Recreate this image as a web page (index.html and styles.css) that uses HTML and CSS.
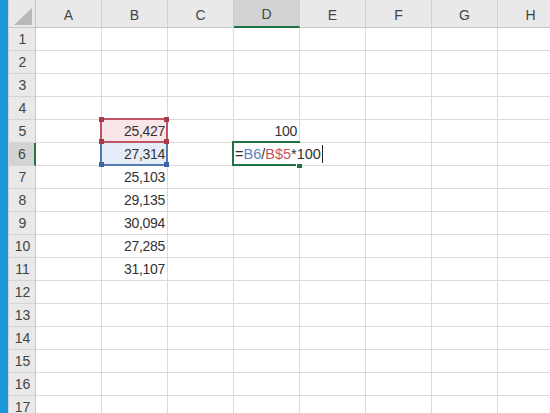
FILE: index.html
```html
<!DOCTYPE html>
<html lang="ja">
<head>
<meta charset="utf-8">
<title>Sheet</title>
<link rel="stylesheet" href="styles.css">
</head>
<body>
<div class="app">
  <div class="edge"></div>
  <div class="sheet">
    <div class="corner"><svg width="18" height="17" viewBox="0 0 18 17"><polygon points="0,17 18,17 18,0" fill="#b9b9b9"/></svg></div>
    <div class="ch">A</div><div class="ch">B</div><div class="ch">C</div><div class="ch ch-sel">D</div><div class="ch">E</div><div class="ch">F</div><div class="ch">G</div><div class="ch">H</div>

    <div class="rh">1</div><div class="c"></div><div class="c"></div><div class="c"></div><div class="c"></div><div class="c"></div><div class="c"></div><div class="c"></div><div class="c"></div>
    <div class="rh">2</div><div class="c"></div><div class="c"></div><div class="c"></div><div class="c"></div><div class="c"></div><div class="c"></div><div class="c"></div><div class="c"></div>
    <div class="rh">3</div><div class="c"></div><div class="c"></div><div class="c"></div><div class="c"></div><div class="c"></div><div class="c"></div><div class="c"></div><div class="c"></div>
    <div class="rh">4</div><div class="c"></div><div class="c"></div><div class="c"></div><div class="c"></div><div class="c"></div><div class="c"></div><div class="c"></div><div class="c"></div>
    <div class="rh">5</div><div class="c"></div><div class="c num ref-red">25,427<span class="rbox rbox-red"><i class="h tl"></i><i class="h tr"></i><i class="h bl"></i><i class="h br"></i></span></div><div class="c"></div><div class="c num">100</div><div class="c"></div><div class="c"></div><div class="c"></div><div class="c"></div>
    <div class="rh rh-sel">6</div><div class="c"></div><div class="c num ref-blue">27,314<span class="rbox rbox-blue"><i class="h bl"></i><i class="h br"></i></span></div><div class="c"></div><div class="c active"><span class="abox"><i class="fill"></i></span><span class="edit">=<span class="t-blue">B6</span>/<span class="t-red">B$5</span>*100<span class="caret"></span></span></div><div class="c"></div><div class="c"></div><div class="c"></div><div class="c"></div>
    <div class="rh">7</div><div class="c"></div><div class="c num">25,103</div><div class="c"></div><div class="c"></div><div class="c"></div><div class="c"></div><div class="c"></div><div class="c"></div>
    <div class="rh">8</div><div class="c"></div><div class="c num">29,135</div><div class="c"></div><div class="c"></div><div class="c"></div><div class="c"></div><div class="c"></div><div class="c"></div>
    <div class="rh">9</div><div class="c"></div><div class="c num">30,094</div><div class="c"></div><div class="c"></div><div class="c"></div><div class="c"></div><div class="c"></div><div class="c"></div>
    <div class="rh">10</div><div class="c"></div><div class="c num">27,285</div><div class="c"></div><div class="c"></div><div class="c"></div><div class="c"></div><div class="c"></div><div class="c"></div>
    <div class="rh">11</div><div class="c"></div><div class="c num">31,107</div><div class="c"></div><div class="c"></div><div class="c"></div><div class="c"></div><div class="c"></div><div class="c"></div>
    <div class="rh">12</div><div class="c"></div><div class="c"></div><div class="c"></div><div class="c"></div><div class="c"></div><div class="c"></div><div class="c"></div><div class="c"></div>
    <div class="rh">13</div><div class="c"></div><div class="c"></div><div class="c"></div><div class="c"></div><div class="c"></div><div class="c"></div><div class="c"></div><div class="c"></div>
    <div class="rh">14</div><div class="c"></div><div class="c"></div><div class="c"></div><div class="c"></div><div class="c"></div><div class="c"></div><div class="c"></div><div class="c"></div>
    <div class="rh">15</div><div class="c"></div><div class="c"></div><div class="c"></div><div class="c"></div><div class="c"></div><div class="c"></div><div class="c"></div><div class="c"></div>
    <div class="rh">16</div><div class="c"></div><div class="c"></div><div class="c"></div><div class="c"></div><div class="c"></div><div class="c"></div><div class="c"></div><div class="c"></div>
    <div class="rh">17</div><div class="c"></div><div class="c"></div><div class="c"></div><div class="c"></div><div class="c"></div><div class="c"></div><div class="c"></div><div class="c"></div>
  </div>
</div>
</body>
</html>
```

FILE: styles.css
```css
* { box-sizing: border-box; }
html, body {
  margin: 0;
  padding: 0;
  width: 550px;
  height: 413px;
  overflow: hidden;
  background: #ffffff;
}
body {
  font-family: "Liberation Sans", Arial, sans-serif;
  font-size: 14px;
  color: #333;
}
.app {
  display: flex;
  width: 550px;
  height: 413px;
  overflow: hidden;
}
.edge {
  flex: 0 0 9px;
  background: #1b98d9;
  border-right: 1px solid #c9d3da;
}
.sheet {
  flex: 0 0 auto;
  display: grid;
  grid-template-columns: 27px repeat(8, 66px);
  grid-template-rows: 28px repeat(17, 23px);
}
.corner {
  background: #e9e9e9;
  border-right: 1px solid #c6c6c6;
  border-bottom: 1px solid #c6c6c6;
  display: flex;
  justify-content: flex-end;
  align-items: flex-end;
  padding: 0 3px 2px 0;
}
.corner svg { display: block; }
.ch {
  background: #e9e9e9;
  border-right: 1px solid #d0d0d0;
  border-bottom: 1px solid #c6c6c6;
  display: flex;
  align-items: center;
  justify-content: center;
  color: #444;
  font-size: 14px;
  padding-top: 2px;
}
.ch-sel {
  background: #d3d3d3;
  border-bottom: 2px solid #217346;
  color: #3d4a42;
}
.rh {
  background: #e9e9e9;
  border-right: 1px solid #c6c6c6;
  border-bottom: 1px solid #d4d4d4;
  display: flex;
  align-items: center;
  justify-content: center;
  color: #444;
  font-size: 14px;
  padding-left: 1px;
}
.rh-sel {
  background: #d3d3d3;
  border-right: 2px solid #217346;
  color: #3d4a42;
}
.c {
  border-right: 1px solid #dadada;
  border-bottom: 1px solid #dadada;
  position: relative;
}
.num {
  display: flex;
  align-items: center;
  justify-content: flex-end;
  padding-right: 2px;
  letter-spacing: -0.3px;
  color: #333;
  font-size: 14px;
}
.ref-red { background: #fae6e9; }
.ref-blue { background: #e5edf8; }
.rbox {
  position: absolute;
  top: -2px;
  left: -2px;
  right: -1px;
  bottom: -1px;
  border: 2px solid;
  pointer-events: none;
}
.rbox-red { border-color: #c15462; z-index: 2; }
.rbox-blue { border-color: #5479b3; z-index: 1; }
.h {
  position: absolute;
  width: 5px;
  height: 5px;
}
.rbox-red .h { background: #a63c4c; }
.rbox-blue .h { background: #3f65a3; }
.h.tl { top: -3px; left: -3px; }
.h.tr { top: -3px; right: -3px; }
.h.bl { bottom: -3px; left: -3px; }
.h.br { bottom: -3px; right: -3px; }
.abox {
  position: absolute;
  top: -2px;
  left: -2px;
  right: -1px;
  bottom: -1px;
  border: 2px solid #217346;
  z-index: 3;
}
.fill {
  position: absolute;
  right: -4px;
  bottom: -4px;
  width: 6px;
  height: 5px;
  background: #217346;
  border-left: 1px solid #fff;
  border-top: 1px solid #fff;
}
.edit {
  position: absolute;
  top: 0;
  left: 0;
  height: 21px;
  display: flex;
  align-items: center;
  padding-left: 1px;
  padding-right: 2px;
  background: #ffffff;
  z-index: 4;
  white-space: nowrap;
  color: #333;
  letter-spacing: 0;
  font-size: 14.5px;
}
.t-blue { color: #5b7fc0; }
.t-red { color: #c4565f; }
.caret {
  display: inline-block;
  width: 1px;
  height: 18px;
  margin-left: 1px;
  background: #222;
}
```
